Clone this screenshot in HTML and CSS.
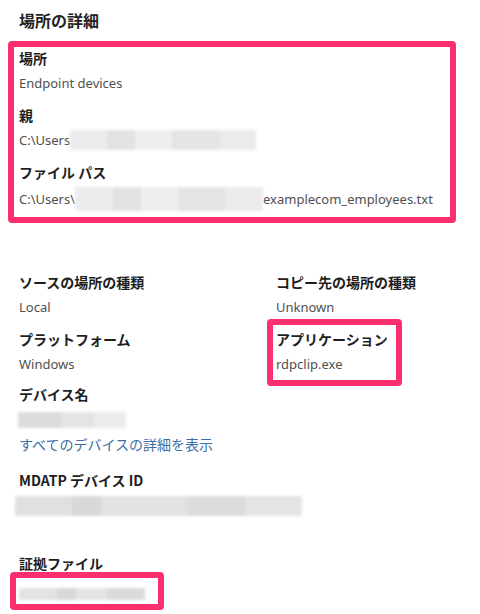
FILE: index.html
```html
<!DOCTYPE html>
<html lang="ja">
<head>
  <meta charset="UTF-8" />
  <title>場所の詳細</title>
  <link rel="stylesheet" href="styles.css">
</head>
<body>
  <h2 class="title">場所の詳細</h2>

  <div class="mark mark-wide">
    <div class="field">
      <div class="label">場所</div>
      <div class="value">Endpoint devices</div>
    </div>
    <div class="field">
      <div class="label">親</div>
      <div class="value">C:\Users<span class="blur blur-parent"></span></div>
    </div>
    <div class="field last">
      <div class="label">ファイル パス</div>
      <div class="value">C:\Users\<span class="blur blur-path"></span>examplecom_employees.txt</div>
    </div>
  </div>

  <div class="grid">
    <div class="field">
      <div class="label">ソースの場所の種類</div>
      <div class="value">Local</div>
    </div>
    <div class="field">
      <div class="label">コピー先の場所の種類</div>
      <div class="value">Unknown</div>
    </div>
    <div class="field">
      <div class="label">プラットフォーム</div>
      <div class="value">Windows</div>
    </div>
    <div class="field mark mark-app">
      <div class="label">アプリケーション</div>
      <div class="value">rdpclip.exe</div>
    </div>
  </div>

  <div class="field device">
    <div class="label">デバイス名</div>
    <div class="blur blur-device"></div>
    <a class="link" href="#">すべてのデバイスの詳細を表示</a>
  </div>

  <div class="field">
    <div class="label">MDATP デバイス ID</div>
    <div class="blur blur-id"></div>
  </div>

  <div class="field evidence">
    <div class="label">証拠ファイル</div>
    <div class="mark mark-evidence">
      <div class="blur blur-file"></div>
    </div>
  </div>
</body>
</html>
```

FILE: styles.css
```css
html, body {
  margin: 0;
  padding: 0;
  background: #fff;
}

body {
  padding: 10px 0 0 19px;
  font-family: 'Noto Sans', 'Noto Sans CJK JP', sans-serif;
  font-size: 13px;
  color: #505050;
  width: 461px;
  overflow: hidden;
  height: 604px;
}

.title {
  font-family: 'Noto Sans CJK JP', sans-serif;
  font-size: 16px;
  font-weight: 700;
  line-height: 20px;
  color: #222;
  margin: 0 0 11px 0;
}

/* pink highlight boxes */
.mark {
  border: 6px solid #fb2f6d;
  border-radius: 4px;
  box-sizing: border-box;
}

.mark-wide {
  width: 448px;
  margin-left: -11px;
  padding: 1px 5px 6px 5px;
}

.field {
  margin-bottom: 12px;
}

.field.last {
  margin-bottom: 0;
}

.label {
  font-family: 'Noto Sans CJK JP', sans-serif;
  font-size: 14px;
  font-weight: 700;
  line-height: 20px;
  color: #1e1e1e;
}

.value {
  line-height: 20px;
  margin-top: 5px;
  white-space: nowrap;
  display: flex;
  align-items: center;
}

.blur {
  display: inline-block;
  background: linear-gradient(90deg, #ececec 0 20%, #e2e2e2 20% 35%, #eeeeee 35% 55%, #e4e4e4 55% 80%, #ebebeb 80%);
  filter: blur(1.5px);
}

.blur-parent {
  width: 186px;
  height: 20px;
}

.blur-path {
  width: 188px;
  height: 24px;
}

.grid {
  display: grid;
  grid-template-columns: 257px 1fr;
  margin-top: 49px;
}

.mark-app {
  width: 135px;
  margin: -10px 0 0 -9px;
  padding: 4px 6px 6px 3px;
}

.device {
  margin-top: -2px;
}

.blur-device {
  width: 108px;
  height: 16px;
  margin: 8px 0 2px -1px;
  background: linear-gradient(90deg, #dcdcdc 0 40%, #e4e4e4 40% 70%, #ececec 70%);
}

.link {
  display: block;
  font-family: 'Noto Sans CJK JP', sans-serif;
  font-size: 14px;
  line-height: 20px;
  color: #3b6ea5;
  text-decoration: none;
}

.blur-id {
  width: 287px;
  height: 20px;
  margin: 6px 0 0 -4px;
  background: linear-gradient(90deg, #e0e0e0 0 20%, #d8d8d8 20% 30%, #e2e2e2 30% 60%, #dcdcdc 60% 80%, #e4e4e4 80%);
}

.device + .field {
  margin-top: 16px;
}

.evidence {
  margin-top: 33px;
}

.mark-evidence {
  width: 154px;
  height: 38px;
  margin: -1px 0 0 -9px;
  padding: 8px 0 0 3px;
}

.blur-file {
  width: 126px;
  height: 12px;
  background: linear-gradient(90deg, #e2e2e2 0 30%, #d8d8d8 30% 45%, #e4e4e4 45% 70%, #dadada 70%);
}
```
